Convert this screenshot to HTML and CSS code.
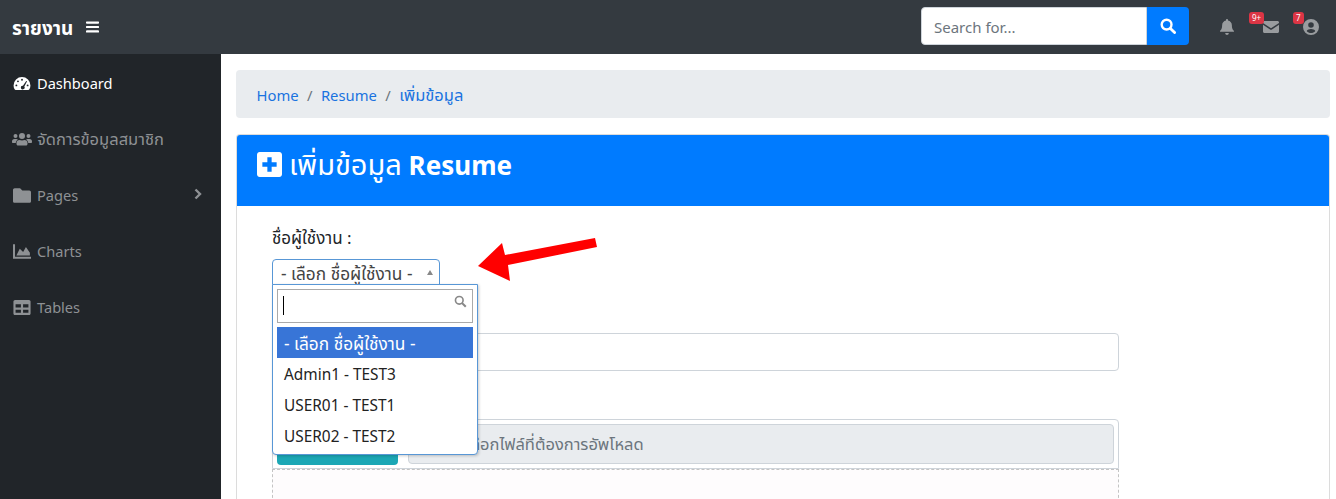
FILE: index.html
```html
<!DOCTYPE html>
<html lang="th">
<head>
<meta charset="utf-8">
<title>รายงาน</title>
<link rel="stylesheet" href="styles.css">
</head>
<body>
<header class="navbar">
  <a class="brand">รายงาน</a>
  <svg class="burger" viewBox="0 0 14 12"><path d="M1 0h12a1 1 0 0 1 0 2.4H1A1 1 0 0 1 1 0zM1 4.8h12a1 1 0 0 1 0 2.4H1a1 1 0 0 1 0-2.4zM1 9.6h12a1 1 0 0 1 0 2.4H1a1 1 0 0 1 0-2.4z"/></svg>
  <div class="search">
    <span class="search-input">Search for...</span>
    <span class="search-btn"><svg viewBox="0 0 16 16"><circle cx="6.6" cy="6.6" r="4.9" fill="none" stroke="#fff" stroke-width="2.4"/><path d="M10.4 10.4l4.2 4.2" stroke="#fff" stroke-width="2.8" stroke-linecap="round"/></svg></span>
  </div>
  <div class="nav-icons">
    <span class="nav-icon"><svg class="ic-bell" viewBox="0 0 14 16"><path d="M7 0c.6 0 1 .5 1 1v.6c2.300.5 3.900 2.400 3.900 4.800 0 3.600 1.300 4.700 2 5.400.3.300.1 1-.5 1H.600c-.6 0-.8-.7-.5-1 .7-.7 2-1.800 2-5.400C2.100 4 3.700 2.100 6 1.600V1c0-.5.4-1 1-1zM5.200 14h3.600c0 1.100-.8 2-1.800 2s-1.800-.9-1.800-2z"/></svg></span>
    <span class="nav-icon"><span class="badge badge-wide">9+</span><svg class="ic-mail" viewBox="0 0 16 12"><path d="M1.500 0h13C15.300 0 16 .7 16 1.500v.4L8 7.300 0 1.900v-.4C0 .7.700 0 1.500 0zM0 3.700l7.400 5c.4.200.8.200 1.200 0l7.400-5v6.800c0 .8-.7 1.500-1.500 1.500h-13C.7 12 0 11.300 0 10.500z"/></svg></span>
    <span class="nav-icon"><span class="badge">7</span><svg class="ic-user" viewBox="0 0 16 16"><path fill-rule="evenodd" d="M8 0a8 8 0 1 1 0 16A8 8 0 0 1 8 0zm0 3.200a2.800 2.800 0 1 0 0 5.600 2.800 2.800 0 0 0 0-5.600zM8 10c-1.900 0-3.500.7-4.300 1.900C4.800 13.200 6.300 14 8 14s3.200-.8 4.300-2.100C11.500 10.700 9.900 10 8 10z"/></svg></span>
  </div>
</header>
<div class="shell">
  <aside class="sidebar">
    <a class="side-item active"><svg class="side-ic" viewBox="0 0 18 16"><path fill-rule="evenodd" d="M9 1a9 9 0 0 1 9 9c0 1.700-.5 3.200-1.300 4.500-.2.300-.5.500-.9.500H2.200c-.4 0-.7-.2-.9-.5A8.900 8.900 0 0 1 0 10a9 9 0 0 1 9-9zm0 2a1 1 0 1 0 0 2 1 1 0 0 0 0-2zM4.700 4.700a1 1 0 1 0 0 2 1 1 0 0 0 0-2zm8.800.5L10 10.300a2 2 0 1 0 1.500 1l2.900-5.600zM3 9a1 1 0 1 0 0 2 1 1 0 0 0 0-2zm12 0a1 1 0 1 0 0 2 1 1 0 0 0 0-2z"/></svg>Dashboard</a>
    <a class="side-item"><svg class="side-ic side-ic-wide" viewBox="0 0 20 14"><path d="M3.500 1.500a2 2 0 1 1 0 4 2 2 0 0 1 0-4zm13 0a2 2 0 1 1 0 4 2 2 0 0 1 0-4zM10 .5a3 3 0 1 1 0 6 3 3 0 0 1 0-6zM2.500 6.500h2c.5 0 1 .2 1.400.5A4.500 4.500 0 0 0 3.700 10.500H1c-.6 0-1-.4-1-1V9a2.500 2.500 0 0 1 2.500-2.500zm13 0h2A2.500 2.500 0 0 1 20 9v.5c0 .6-.4 1-1 1h-2.700A4.500 4.500 0 0 0 14.100 7c.4-.3.900-.5 1.400-.5zM7.500 7.500c.7.300 1.600.500 2.500.500s1.800-.2 2.500-.5c1.700 0 3 1.300 3 3v1c0 .8-.7 1.500-1.500 1.500H6c-.8 0-1.500-.7-1.500-1.500v-1c0-1.700 1.300-3 3-3z"/></svg><span class="th">จัดการข้อมูลสมาชิก</span></a>
    <a class="side-item"><svg class="side-ic" viewBox="0 0 16 13"><path d="M1.500 0h4.800l2 2h6.200c.8 0 1.500.7 1.500 1.500v8c0 .8-.7 1.500-1.500 1.500h-13C.7 13 0 12.300 0 11.500v-10C0 .7.700 0 1.500 0z"/></svg>Pages<svg class="chev" viewBox="0 0 8 12"><path d="M1.500 1.500L6 6l-4.500 4.500" fill="none" stroke="currentColor" stroke-width="2.400"/></svg></a>
    <a class="side-item"><svg class="side-ic" viewBox="0 0 16 13"><path d="M0 0h1.800v11.200H16V13H0zM3 10l3-6 3 3 2.500-4.500L15 7.500V10z"/></svg>Charts</a>
    <a class="side-item"><svg class="side-ic" viewBox="0 0 16 14"><path fill-rule="evenodd" d="M1.500 0h13c.8 0 1.500.7 1.500 1.500v11c0 .8-.7 1.500-1.500 1.500h-13C.7 14 0 13.300 0 12.500v-11C0 .7.700 0 1.500 0zM2 4v3h5V4zm7 0v3h5V4zM2 9v3h5V9zm7 0v3h5V9z"/></svg>Tables</a>
  </aside>
  <main class="content">
    <nav class="breadcrumb">
      <a>Home</a><span class="sep">/</span><a>Resume</a><span class="sep">/</span><a class="th">เพิ่มข้อมูล</a>
    </nav>
    <section class="card">
      <div class="card-header">
        <svg class="plus" viewBox="0 0 14 14"><path fill-rule="evenodd" d="M1.500 0h11C13.300 0 14 .7 14 1.500v11c0 .8-.7 1.500-1.500 1.500h-11C.7 14 0 13.300 0 12.500v-11C0 .7.700 0 1.500 0zM5.800 3v2.800H3v2.400h2.800V11h2.400V8.200H11V5.800H8.200V3z"/></svg>
        <h1><span class="th-head">เพิ่มข้อมูล</span> <b>Resume</b></h1>
      </div>
      <div class="card-body">
        <label class="lbl">ชื่อผู้ใช้งาน :</label>
        <div class="select-wrap">
          <div class="select"><span class="sel-text">- เลือก ชื่อผู้ใช้งาน -</span><i class="caret"></i></div>
          <div class="dropdown">
            <div class="dd-search"><i class="cursor"></i><svg viewBox="0 0 16 16"><circle cx="6.500" cy="6.500" r="4.700" fill="none" stroke="#888" stroke-width="2"/><path d="M10 10l4.500 4.500" stroke="#888" stroke-width="2.600"/></svg></div>
            <div class="dd-opt sel sel-text">- เลือก ชื่อผู้ใช้งาน -</div>
            <div class="dd-opt">Admin1 - TEST3</div>
            <div class="dd-opt">USER01 - TEST1</div>
            <div class="dd-opt">USER02 - TEST2</div>
          </div>
          <svg class="arrow" viewBox="0 0 120 48"><path d="M1 32L25 9 28 21 118 4 120 13 31 31 33 47z" fill="#f00"/></svg>
        </div>
        <div class="text-field"></div>
        <div class="file-field">
          <span class="file-btn"></span>
          <span class="file-name">เลือกไฟล์ที่ต้องการอัพโหลด</span>
        </div>
        <div class="dropzone"></div>
      </div>
    </section>
  </main>
</div>
</body>
</html>
```

FILE: styles.css
```css
* { box-sizing: border-box; }
html, body { margin: 0; height: 100%; overflow: hidden; }
body {
  font-family: "Noto Sans", "Open Sans", "Noto Sans Thai", "DejaVu Sans", sans-serif;
  font-size: 16px;
  color: #212529;
  background: #fff;
}
.th { font-size: 16.5px; }
.navbar {
  height: 54px;
  background: #343a40;
  display: flex;
  align-items: center;
  padding: 0 17px 0 12px;
}
.brand { color: #fff; font-size: 19px; font-weight: 700; margin-top: 4px; }
.burger { width: 13px; height: 12px; fill: #fff; margin-left: 13px; }
.search { display: flex; margin-left: auto; height: 38px; margin-top: -2px; }
.search-input {
  width: 226px;
  background: #fff;
  border: 1px solid #ced4da;
  border-radius: 4px 0 0 4px;
  padding: 0 12px;
  line-height: 38px;
  font-size: 15px;
  color: #6c757d;
}
.search-btn {
  width: 42px;
  background: #007bff;
  border-radius: 0 4px 4px 0;
  display: flex;
  align-items: center;
  justify-content: center;
}
.search-btn svg { width: 16px; height: 16px; }
.nav-icons { display: flex; margin-left: 31px; }
.nav-icon { position: relative; display: flex; align-items: center; height: 20px; fill: #999c9f; }
.nav-icon + .nav-icon { margin-left: 29px; }
.nav-icon + .nav-icon + .nav-icon { margin-left: 24px; }
.ic-bell { width: 14px; height: 16px; }
.ic-mail { width: 16px; height: 12px; }
.ic-user { width: 16px; height: 16px; }
.badge {
  position: absolute;
  top: -5px;
  left: -10px;
  height: 12px;
  min-width: 10px;
  padding: 0 3px;
  border-radius: 3px;
  background: #dc3545;
  color: #fff;
  font-size: 8px;
  line-height: 12px;
  text-align: center;
}
.badge-wide { left: -14px; width: 15px; }
.shell { display: flex; height: 445px; }
.sidebar { width: 221px; flex: none; background: #212529; padding-top: 1px; }
.side-item {
  display: flex;
  align-items: center;
  height: 56px;
  padding-left: 13px;
  color: #8e9194;
  fill: #8e9194;
  font-size: 14.6px;
  line-height: 20px;
}
.side-item.active { color: #fff; fill: #fff; }
.side-ic { width: 18px; height: 15px; margin-right: 6px; flex: none; }
.side-ic-wide { width: 20px; margin-left: -1px; margin-right: 5px; }
.chev { width: 8px; height: 12px; margin-left: auto; margin-right: 19px; margin-top: -3px; }
.content { flex: 1; min-width: 0; padding: 16px 6px 0 15px; overflow: hidden; }
.breadcrumb {
  height: 48px;
  background: #e9ecef;
  border-radius: 4px;
  display: flex;
  align-items: center;
  padding: 2px 21px 0 20.500px;
  color: #6c757d;
  font-size: 14.8px;
  line-height: 20px;
}
.breadcrumb a { color: #1a73e0; }
.sep { margin: 0 8.400px; }
.card {
  margin-top: 16px;
  border: 1px solid #dcdcdc;
  border-bottom: 0;
  border-radius: 4px 4px 0 0;
  height: 400px;
}
.card-header {
  height: 71px;
  background: #007bff;
  color: #fff;
  display: flex;
  align-items: center;
  padding: 0 20px;
  border-radius: 3px 3px 0 0;
}
.plus { width: 25px; height: 25px; fill: #fff; margin-right: 7px; flex: none; margin-top: -12px; }
.card-header h1 { margin: 0 0 12px; font-size: 26px; font-weight: 400; line-height: 34px; }
.th-head { font-size: 29px; }
.card-header b { font-weight: 700; }
.card-body { padding: 20px 35px 0; width: 917px; }
.lbl { display: block; font-size: 17px; line-height: 24px; }
.sel-text { font-size: 17.300px; }
.select-wrap { position: relative; margin-top: 9px; height: 62px; }
.select {
  width: 168px;
  height: 26px;
  border: 1px solid #5897d6;
  border-radius: 4px 4px 0 0;
  background: #fff;
  display: flex;
  align-items: center;
  justify-content: space-between;
  padding: 4px 6px 0 8px;
  line-height: 24px;
  color: #444;
}
.caret {
  width: 0; height: 0;
  border-left: 3.500px solid transparent;
  border-right: 3.500px solid transparent;
  border-bottom: 5px solid #888;
  margin-top: -4px;
}
.dropdown {
  position: absolute;
  top: 25px;
  left: 0;
  width: 206px;
  height: 171px;
  background: #fff;
  border: 1px solid #5897d6;
  border-radius: 0 0 4px 4px;
  box-shadow: 1px 1px 3px rgba(0,0,0,.2);
  padding: 4px 4px 0;
  z-index: 3;
}
.dd-search {
  position: relative;
  height: 34px;
  border: 1px solid #aaa;
  margin-bottom: 4px;
}
.cursor { position: absolute; left: 5px; top: 6px; width: 1px; height: 19px; background: #000; }
.dd-search svg { position: absolute; right: 5px; top: 5px; width: 13px; height: 13px; }
.dd-opt { height: 31px; line-height: 33px; padding: 0 7px; font-size: 15.400px; color: #222; }
.dd-opt.sel { background: #3875d7; color: #fff; font-size: 17.300px; }
.arrow { position: absolute; left: 205px; top: -25px; width: 120px; height: 48px; }
.text-field {
  height: 38px;
  border: 1px solid #ced4da;
  border-radius: 4px;
  margin-top: 12px;
}
.file-field {
  margin-top: 48px;
  height: 50px;
  border: 1px solid #ced4da;
  border-radius: 4px 4px 0 0;
  padding: 4px;
  display: flex;
  gap: 10px;
  align-items: stretch;
}
.file-btn { width: 121px; background: #1ba7b5; border-radius: 0 0 4px 4px; margin-bottom: -1px; }
.file-name {
  flex: 1;
  background: #e9ecef;
  border: 1px solid #ced4da;
  border-radius: 4px;
  padding: 0 57px;
  line-height: 38px;
  font-size: 16.500px;
  color: #6c757d;
}
.dropzone {
  height: 60px;
  background: #fefcfd;
  border: 1px dashed #c4c4c4;
  border-bottom: 0;
}
```
